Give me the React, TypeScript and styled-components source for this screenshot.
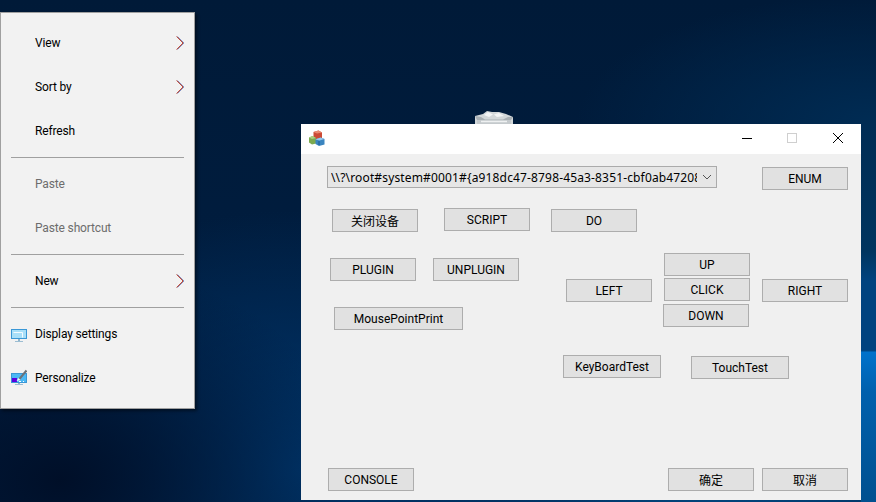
import { createGlobalStyle, styled } from "styled-components";

const GlobalStyle = createGlobalStyle`
  html, body {
    margin: 0;
    padding: 0;
  }
  body {
    width: 876px;
    height: 502px;
    overflow: hidden;
    font-family: Roboto, "Noto Sans CJK SC", sans-serif;
  }
`;

const Desktop = styled.div`
  position: relative;
  width: 876px;
  height: 502px;
  overflow: hidden;
  background:
    linear-gradient(180deg, transparent 0 24.7%, #002c54 24.7%, #00355f 50%, #00437f 56%, #00437f 69.8%, #0072cb 70.2%, #0060ad 78%, #00508f 100%) right top / 15px 100% no-repeat,
    radial-gradient(ellipse 300px 130px at 876px 124px, #002c54 0%, rgba(0, 44, 84, 0) 100%),
    radial-gradient(ellipse 300px 220px at 60px 480px, #000f28 0%, rgba(0, 15, 40, 0) 100%),
    radial-gradient(ellipse 340px 260px at 300px 470px, #00366c 0%, rgba(0, 54, 108, 0) 100%),
    radial-gradient(ellipse 400px 120px at 720px 520px, #014a85 0%, rgba(1, 74, 133, 0) 100%),
    linear-gradient(180deg, #001a38 0%, #001f44 100%);
`;

const ContextMenu = styled.div`
  position: absolute;
  left: 0;
  top: 12px;
  width: 193px;
  padding: 8px 0;
  background: #f2f2f2;
  border: 1px solid #a0a0a0;
  box-shadow: 2px 2px 3px rgba(0, 0, 0, 0.45);
`;

const MenuItem = styled.div<{ $disabled?: boolean }>`
  position: relative;
  box-sizing: border-box;
  height: 44px;
  padding: 0 0 1px 34px;
  display: flex;
  align-items: center;
  font-family: Roboto, sans-serif;
  font-size: 12px;
  letter-spacing: -0.15px;
  color: ${(props) => (props.$disabled ? "#6d6d6d" : "#000")};
`;

const MenuIcon = styled.svg<{ $top: number }>`
  position: absolute;
  left: 10px;
  top: ${(props) => props.$top}px;
`;

const Arrow = styled.svg`
  position: absolute;
  right: 9px;
  top: 15px;
`;

const Separator = styled.div`
  height: 1px;
  margin: 4px 10px;
  background: #a0a0a0;
`;

const Bin = styled.svg`
  position: absolute;
  left: 475px;
  top: 109px;
`;

const Window = styled.div`
  position: absolute;
  left: 301px;
  top: 124px;
  width: 560px;
  height: 376px;
  display: flex;
  flex-direction: column;
  background: #f0f0f0;
`;

const TitleBar = styled.div`
  height: 30px;
  flex: none;
  display: flex;
  align-items: center;
  padding-left: 8px;
  background: #fff;
`;

const AppGlyph = styled.svg`
  margin-bottom: 2px;
`;

const Controls = styled.div`
  margin-left: auto;
  display: flex;
  align-items: center;
  height: 30px;
`;

const ControlIcon = styled.svg`
  width: 46px;
  height: 30px;
  display: block;
`;

const Body = styled.div`
  flex: 1;
  display: flex;
  flex-direction: column;
  padding: 12px 13px 9px 26px;
  font-family: Roboto, "Noto Sans CJK SC", sans-serif;
`;

const Row = styled.div<{ $top?: number; $left?: number }>`
  display: flex;
  align-items: flex-start;
  margin-top: ${(props) => props.$top ?? 0}px;
  margin-left: ${(props) => props.$left ?? 0}px;
`;

const Combo = styled.div`
  box-sizing: border-box;
  width: 390px;
  height: 22px;
  display: flex;
  align-items: center;
  padding-left: 3px;
  background: #e6e6e6;
  border: 1px solid #ababab;
  font-family: "Noto Sans", sans-serif;
  font-size: 12px;
  letter-spacing: 0.15px;
  color: #000;
`;

const ComboText = styled.span`
  width: 366px;
  flex: none;
  overflow: hidden;
  white-space: nowrap;
`;

const ComboArrow = styled.svg`
  margin-left: 5px;
`;

const Button = styled.button<{ $width?: number; $top?: number; $left?: number }>`
  box-sizing: border-box;
  flex: none;
  width: ${(props) => props.$width ?? 86}px;
  height: 23px;
  margin: ${(props) => props.$top ?? 0}px 0 0 ${(props) => props.$left ?? 0}px;
  padding: 0;
  background: #e1e1e1;
  border: 1px solid #adadad;
  border-radius: 0;
  font-family: inherit;
  font-size: 12px;
  color: #000;
`;

const Middle = styled.div`
  display: flex;
  margin-top: 21px;
`;

const LeftColumn = styled.div`
  width: 236px;
  flex: none;
  display: flex;
  flex-direction: column;
  padding-top: 5px;
`;

const RightColumn = styled.div`
  display: flex;
  flex-direction: column;
`;

const Pad = styled.div`
  display: flex;
  align-items: flex-start;
`;

const PadCenter = styled.div`
  display: flex;
  flex-direction: column;
  margin-left: 12px;
`;

const Footer = styled.div`
  margin-top: auto;
  display: flex;
  align-items: flex-start;
`;

function DisplayIcon() {
  return (
    <MenuIcon $top={16} width="16" height="15" viewBox="0 0 16 15">
      <rect x="0" y="1" width="16" height="10" fill="#3a97d6" />
      <rect x="1" y="2" width="14" height="8" fill="#a9dff8" />
      <path d="M2.5 4.5h9v5" fill="none" stroke="#f4fbff" strokeWidth="1" />
      <rect x="7" y="11" width="2" height="2" fill="#8fb4cc" />
      <rect x="4" y="13" width="8" height="1" fill="#9cbdd2" />
    </MenuIcon>
  );
}

function PersonalizeIcon() {
  return (
    <MenuIcon $top={13} width="16" height="17" viewBox="0 0 16 17">
      <rect x="0" y="4" width="16" height="10" fill="#3a97d6" />
      <rect x="1" y="5" width="14" height="8" fill="#4cb8f4" />
      <rect x="1" y="9" width="5" height="4" fill="#5a00e0" />
      <rect x="8" y="12" width="2" height="1" fill="#fff" />
      <rect x="12" y="12" width="1" height="1" fill="#fff" />
      <path d="M8 10.5 15.5 1.5" fill="none" stroke="#6d7278" strokeWidth="2" />
      <path d="M5.5 12l2-3 2 2z" fill="#f2f5f8" />
      <rect x="7" y="14" width="2" height="1" fill="#8fb4cc" />
      <rect x="4" y="15" width="8" height="1" fill="#9cbdd2" />
    </MenuIcon>
  );
}

function SubmenuArrow() {
  return (
    <Arrow width="9" height="14" viewBox="0 0 9 14">
      <path d="M1.4 0.5 7.8 7 1.4 13.5" fill="none" stroke="#2b4fa8" strokeWidth="1" opacity="0.7" />
      <path d="M0.6 0.5 7 7 0.6 13.5" fill="none" stroke="#c8452a" strokeWidth="1" />
    </Arrow>
  );
}

function AppIcon() {
  return (
    <AppGlyph width="16" height="16" viewBox="0 0 16 16">
      <path d="M4.5 2 9.5 0.5 13 2.5 13 8 7 9 4.5 7z" fill="#cc4a35" />
      <path d="M4.5 2 9.5 0.5 13 2.5 8 3.5z" fill="#e88a70" />
      <path d="M0 7.5 3.5 6 7 8 7 13.5 3 14.5 0 12.5z" fill="#7caa4f" />
      <path d="M0 7.5 3.5 6 7 8 3 9z" fill="#a9cf80" />
      <path d="M6.5 9.5 11.5 7.5 15.5 9 15.5 14.5 10 16 6.5 14z" fill="#3b85c0" />
      <path d="M6.5 9.5 11.5 7.5 15.5 9 10.5 10.5z" fill="#94c8ec" />
      <path d="M10 11v4" stroke="#1f5f96" strokeWidth="1" />
    </AppGlyph>
  );
}

function RecycleBin() {
  return (
    <Bin width="38" height="15" viewBox="0 0 38 15">
      <path d="M0 7 8 5 12 2 17 3 24 3 31 5 38 8 38 15 0 15z" fill="#d2d7d9" />
      <path d="M9 6 13 3 18 5.5 14 8zM19 5.5 24 4 29 7 22 8z" fill="#f2f4f5" />
      <path d="M0 7 6 8 10 10.5 28 10.5 33 8 38 8 36 11 2 11z" fill="#a8afb3" />
      <rect x="2" y="11" width="34" height="4" fill="#c4c9cc" />
      <path d="M6 12.5h26" stroke="#eef0f1" strokeWidth="1.5" />
    </Bin>
  );
}

const App = () => {
  return (
    <Desktop>
      <GlobalStyle />
      <RecycleBin />

      <ContextMenu>
        <MenuItem>
          View
          <SubmenuArrow />
        </MenuItem>
        <MenuItem>
          Sort by
          <SubmenuArrow />
        </MenuItem>
        <MenuItem>Refresh</MenuItem>
        <Separator />
        <MenuItem $disabled>Paste</MenuItem>
        <MenuItem $disabled>Paste shortcut</MenuItem>
        <Separator />
        <MenuItem>
          New
          <SubmenuArrow />
        </MenuItem>
        <Separator />
        <MenuItem>
          <DisplayIcon />
          Display settings
        </MenuItem>
        <MenuItem>
          <PersonalizeIcon />
          Personalize
        </MenuItem>
      </ContextMenu>

      <Window>
        <TitleBar>
          <AppIcon />
          <Controls>
            <ControlIcon viewBox="0 0 46 30">
              <path d="M19 14.5h10" stroke="#000" strokeWidth="1" />
            </ControlIcon>
            <ControlIcon viewBox="0 0 46 30">
              <rect x="18.5" y="9.5" width="9" height="9" fill="none" stroke="#cfcfcf" strokeWidth="1" />
            </ControlIcon>
            <ControlIcon viewBox="0 0 46 30">
              <path d="M18 9l10 10M28 9 18 19" stroke="#000" strokeWidth="1" />
            </ControlIcon>
          </Controls>
        </TitleBar>

        <Body>
          <Row>
            <Combo>
              <ComboText>\\?\root#system#0001#{"{"}a918dc47-8798-45a3-8351-cbf0ab472086</ComboText>
              <ComboArrow width="10" height="6" viewBox="0 0 10 6">
                <path d="M1 1l4 4 4-4" fill="none" stroke="#555" strokeWidth="1" />
              </ComboArrow>
            </Combo>
            <Button $left={45} $top={1}>ENUM</Button>
          </Row>

          <Row $top={18}>
            <Button $left={5} $top={1}>关闭设备</Button>
            <Button $left={26}>SCRIPT</Button>
            <Button $left={21} $top={1}>DO</Button>
          </Row>

          <Middle>
            <LeftColumn>
              <Row $left={3}>
                <Button>PLUGIN</Button>
                <Button $left={17}>UNPLUGIN</Button>
              </Row>
              <Row $top={26} $left={7}>
                <Button $width={129}>MousePointPrint</Button>
              </Row>
            </LeftColumn>

            <RightColumn>
              <Pad>
                <Button $left={3} $top={26}>LEFT</Button>
                <PadCenter>
                  <Button>UP</Button>
                  <Button $top={2}>CLICK</Button>
                  <Button $top={3} $left={-1}>DOWN</Button>
                </PadCenter>
                <Button $left={12} $top={26}>RIGHT</Button>
              </Pad>
              <Row $top={28}>
                <Button $width={98}>KeyBoardTest</Button>
                <Button $width={98} $left={30} $top={1}>TouchTest</Button>
              </Row>
            </RightColumn>
          </Middle>

          <Footer>
            <Button $left={1}>CONSOLE</Button>
            <Button $left={254}>确定</Button>
            <Button $left={8}>取消</Button>
          </Footer>
        </Body>
      </Window>
    </Desktop>
  );
};

export default App;
